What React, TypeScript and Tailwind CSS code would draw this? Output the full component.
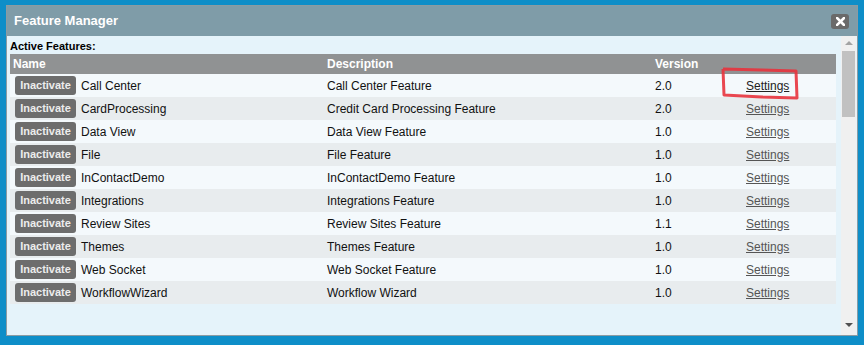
const features = [
  { name: 'Call Center', desc: 'Call Center Feature', version: '2.0' },
  { name: 'CardProcessing', desc: 'Credit Card Processing Feature', version: '2.0' },
  { name: 'Data View', desc: 'Data View Feature', version: '1.0' },
  { name: 'File', desc: 'File Feature', version: '1.0' },
  { name: 'InContactDemo', desc: 'InContactDemo Feature', version: '1.0' },
  { name: 'Integrations', desc: 'Integrations Feature', version: '1.0' },
  { name: 'Review Sites', desc: 'Review Sites Feature', version: '1.1' },
  { name: 'Themes', desc: 'Themes Feature', version: '1.0' },
  { name: 'Web Socket', desc: 'Web Socket Feature', version: '1.0' },
  { name: 'WorkflowWizard', desc: 'Workflow Wizard', version: '1.0' },
];

const grid = 'grid grid-cols-[314px_328px_60px_1fr] items-center';

function FeatureRow({ f, i }: { f: (typeof features)[number]; i: number }) {
  return (
    <div className={`${grid} h-[23px] ${i % 2 === 0 ? 'bg-[#f4f9fc]' : 'bg-[#e8ecee]'}`}>
      <div className="flex items-center gap-[5px] pl-[5px]">
        <button className="h-[19px] w-[61px] rounded-[3px] bg-[#6d6d6d] text-[11px] font-bold text-[#ececec]">
          Inactivate
        </button>
        <span>{f.name}</span>
      </div>
      <span className="pl-[3px]">{f.desc}</span>
      <span className="pl-[3px]">{f.version}</span>
      <span className={`pl-[34px] underline ${i === 0 ? 'text-[#222]' : 'text-[#555]'}`}>Settings</span>
    </div>
  );
}

export default function App() {
  return (
    <div
      className="relative h-[345px] w-[864px] overflow-hidden bg-[#0e8ec8] pl-[6px] pt-[5px]"
      style={{ fontFamily: '"Liberation Sans", Arial, sans-serif' }}
    >
      <div className="flex h-[331px] w-[852px] flex-col border border-[#8b9ba2] bg-[#e5f3fa]">
        {/* title bar */}
        <div className="flex h-[30px] shrink-0 items-center justify-between bg-[#7f9ca8] pl-[7px] pr-[8px]">
          <span className="text-[13px] font-bold text-white">Feature Manager</span>
          <div className="flex h-[15px] w-[18px] items-center justify-center rounded-[3px] bg-[#6a6a6a]">
            <svg width="9" height="9" viewBox="0 0 9 9">
              <path d="M1 1L8 8M8 1L1 8" stroke="white" strokeWidth="2.6" strokeLinecap="square" />
            </svg>
          </div>
        </div>

        <div className="flex flex-1">
          <div className="flex-1 pl-[3px] pr-[5px] text-[12px] text-[#111]">
            <div className="flex h-[18px] items-end text-[11px] font-bold text-black">Active Features:</div>
            <div className={`${grid} h-[20px] bg-[#909293] text-[12px] font-bold text-white`}>
              <span className="pl-[3px]">Name</span>
              <span className="pl-[3px]">Description</span>
              <span className="pl-[3px]">Version</span>
              <span />
            </div>
            {features.map((f, i) => (
              <FeatureRow key={f.name} f={f} i={i} />
            ))}
          </div>

          {/* scrollbar */}
          <div className="mr-[1px] flex w-[15px] flex-col items-center bg-[#f0f0f0] pt-[5px]">
            <div className="h-0 w-0 border-x-[4px] border-b-[4px] border-x-transparent border-b-[#a3a3a3]" />
            <div className="mt-[6px] h-[66px] w-[13px] bg-[#c1c1c1]" />
            <div className="flex-1" />
            <div className="mb-[8px] h-0 w-0 border-x-[4px] border-t-[4px] border-x-transparent border-t-[#505050]" />
          </div>
        </div>
      </div>

      {/* red annotation */}
      <svg className="pointer-events-none absolute left-0 top-0" width="864" height="345">
        <polyline
          points="723,69 762,70 796,71 797,98 762,97 724,95 723,69"
          fill="none"
          stroke="#e8333d"
          strokeWidth="3"
          strokeLinejoin="round"
          opacity="0.9"
        />
      </svg>
    </div>
  );
}
